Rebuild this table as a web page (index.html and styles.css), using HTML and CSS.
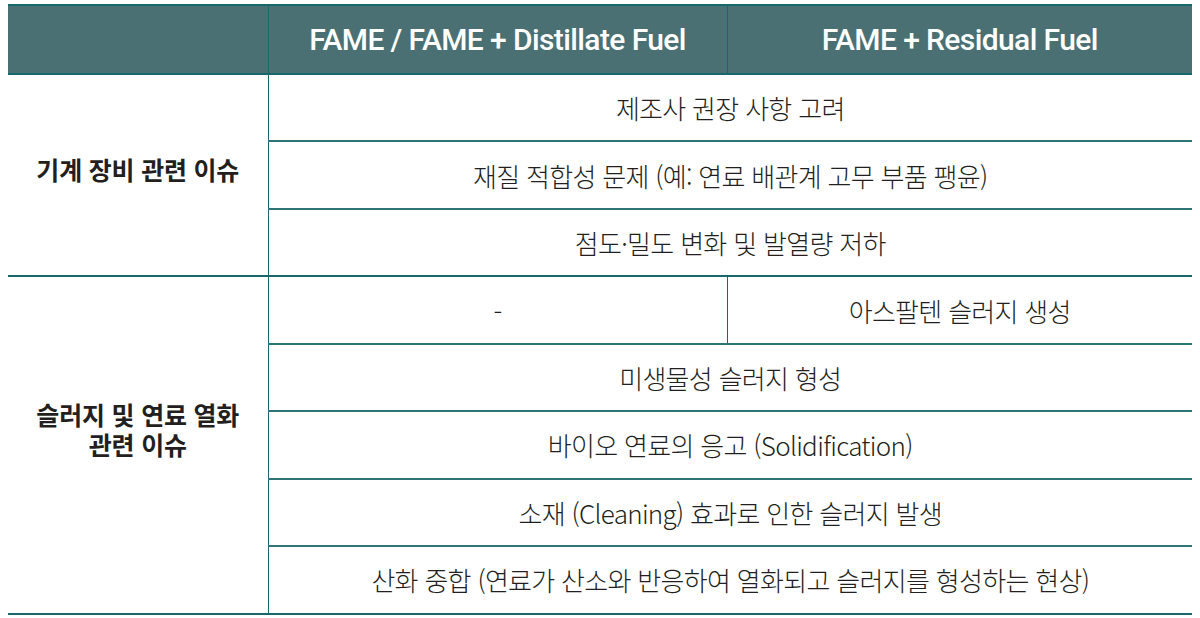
FILE: index.html
```html
<!DOCTYPE html>
<html lang="ko">
<head>
<meta charset="utf-8">
<link rel="stylesheet" href="styles.css">
</head>
<body>
<table class="grid">
  <colgroup>
    <col class="c1"><col class="c2"><col class="c3">
  </colgroup>
  <thead>
    <tr class="head">
      <th class="blank"></th>
      <th>FAME / FAME + Distillate Fuel</th>
      <th>FAME + Residual Fuel</th>
    </tr>
  </thead>
  <tbody>
    <tr>
      <td class="label label-a" rowspan="3">기계 장비 관련 이슈</td>
      <td colspan="2">제조사 권장 사항 고려</td>
    </tr>
    <tr><td colspan="2">재질 적합성 문제 (예: 연료 배관계 고무 부품 팽윤)</td></tr>
    <tr class="group-end"><td colspan="2">점도·밀도 변화 및 발열량 저하</td></tr>
    <tr>
      <td class="label label-b" rowspan="5"><span class="line">슬러지 및 연료 열화</span><span class="line">관련 이슈</span></td>
      <td>-</td>
      <td>아스팔텐 슬러지 생성</td>
    </tr>
    <tr><td colspan="2">미생물성 슬러지 형성</td></tr>
    <tr><td colspan="2">바이오 연료의 응고 (Solidification)</td></tr>
    <tr><td colspan="2">소재 (Cleaning) 효과로 인한 슬러지 발생</td></tr>
    <tr class="group-end"><td colspan="2">산화 중합 (연료가 산소와 반응하여 열화되고 슬러지를 형성하는 현상)</td></tr>
  </tbody>
</table>
</body>
</html>
```

FILE: styles.css
```css
html, body {
  margin: 0;
  padding: 0;
  background: #ffffff;
}
body {
  padding: 4px 8px 0 8px;
  font-family: "Noto Sans CJK KR", "Noto Sans", sans-serif;
  color: #231f20;
}
.grid {
  width: 1184px;
  border-collapse: collapse;
  table-layout: fixed;
}
.c1 { width: 260px; }
.c2 { width: 459px; }
.c3 { width: 465px; }

.head th {
  height: 67px;
  padding: 0;
  background: #4a7073;
  color: #ffffff;
  font-family: Roboto, "Noto Sans CJK KR", sans-serif;
  font-weight: 500;
  font-size: 30px;
  letter-spacing: -0.6px;
  text-align: center;
  border-top: 2px solid #17686a;
  border-bottom: 2px solid #17686a;
  border-left: 1.5px solid #17686a;
}
.head th.blank { border-left: none; }

td {
  height: 65.45px;
  padding: 0;
  text-align: center;
  vertical-align: middle;
  font-size: 26px;
  font-weight: 300;
  letter-spacing: -0.7px;
  border-bottom: 2px solid #2e7576;
  border-left: 1.5px solid #17686a;
}
td.label {
  border-left: none;
  font-size: 25px;
  font-weight: 700;
  line-height: 30px;
  letter-spacing: -0.2px;
  border-bottom: 2px solid #17686a;
}
td.label .line {
  display: block;
  height: 30px;
}
td.label-a { padding-bottom: 12px; }
td.label-b { padding-bottom: 32px; }
tr.group-end td { border-bottom-color: #17686a; }
```
